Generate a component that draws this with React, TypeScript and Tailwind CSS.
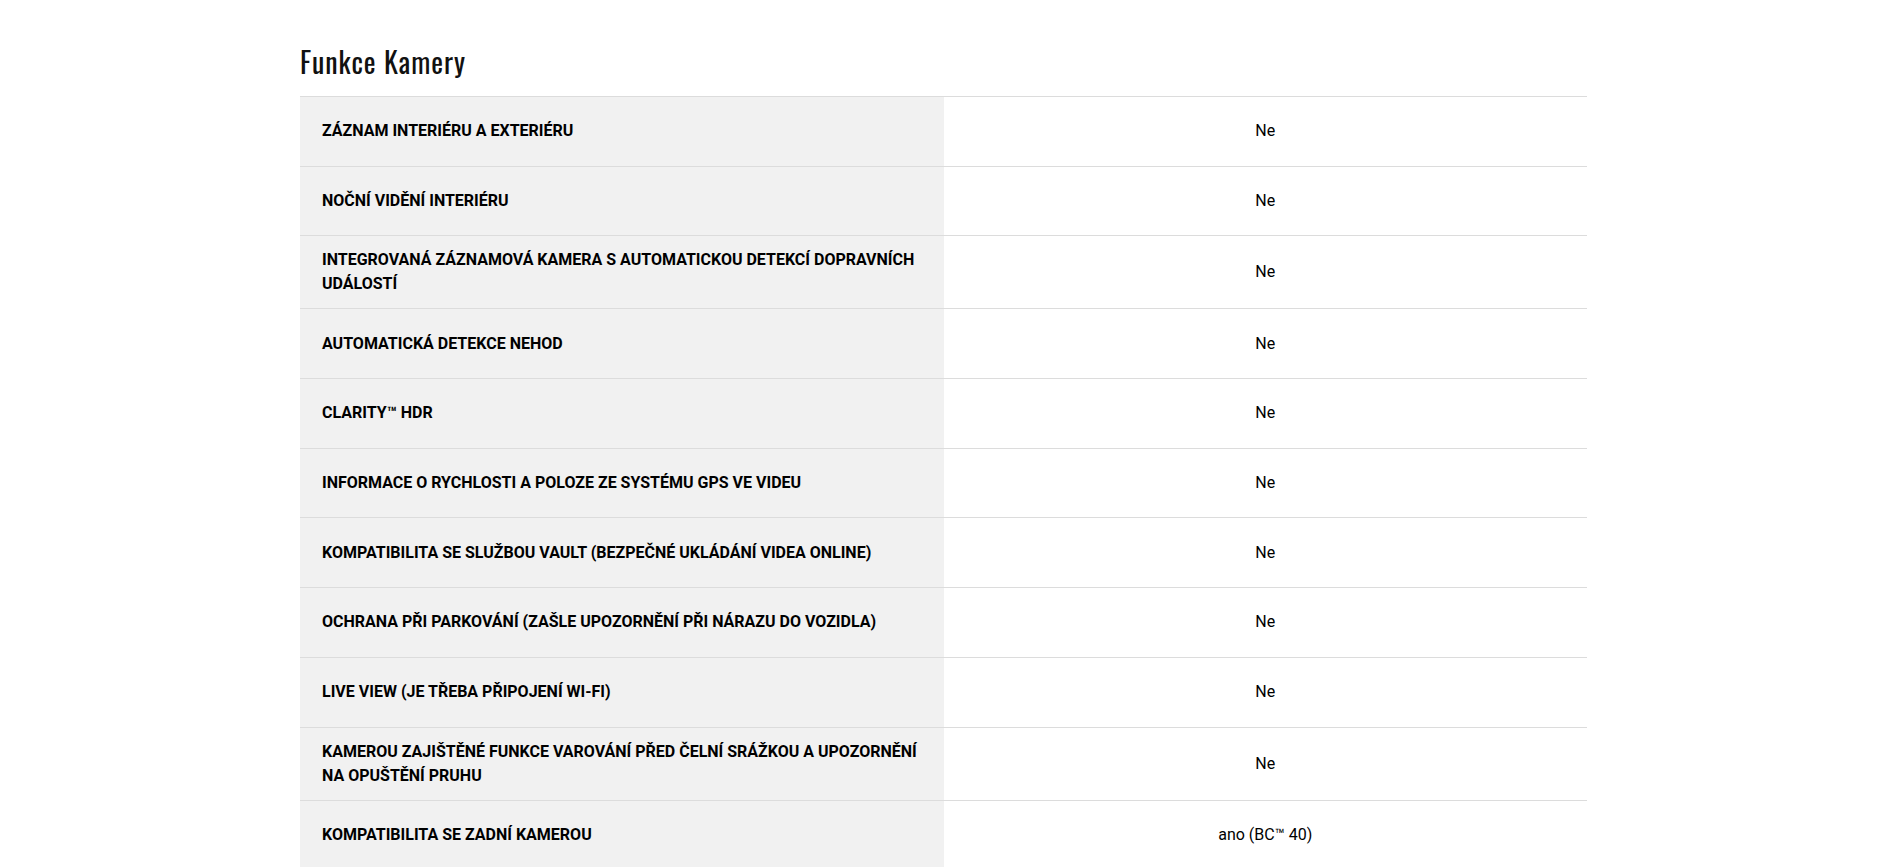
const ROWS: { label: string; value: string }[] = [
  { label: 'Záznam interiéru a exteriéru', value: 'Ne' },
  { label: 'Noční vidění interiéru', value: 'Ne' },
  { label: 'Integrovaná záznamová kamera s automatickou detekcí dopravních událostí', value: 'Ne' },
  { label: 'Automatická detekce nehod', value: 'Ne' },
  { label: 'Clarity™ HDR', value: 'Ne' },
  { label: 'Informace o rychlosti a poloze ze systému GPS ve videu', value: 'Ne' },
  { label: 'Kompatibilita se službou Vault (bezpečné ukládání videa online)', value: 'Ne' },
  { label: 'Ochrana při parkování (zašle upozornění při nárazu do vozidla)', value: 'Ne' },
  { label: 'Live View (je třeba připojení Wi-Fi)', value: 'Ne' },
  { label: 'Kamerou zajištěné funkce varování před čelní srážkou a upozornění na opuštění pruhu', value: 'Ne' },
  { label: 'Kompatibilita se zadní kamerou', value: 'ano (BC™ 40)' },
];

export default function App() {
  return (
    <div className="min-h-screen bg-white font-['Roboto',sans-serif] text-black">
      <div className="w-[1287px] ml-[300px] pt-[44px]">
        <h2 className="font-['Oswald','Liberation_Sans_Narrow','DejaVu_Sans_Condensed',sans-serif] text-[28px] leading-[36px] tracking-[1px] font-normal text-[#111] pb-[16px]">
          Funkce Kamery
        </h2>
        <div className="border-t border-[#dcdcdc]">
          {ROWS.map(r => (
            <div key={r.label} className="grid grid-cols-2 border-b border-[#dcdcdc] min-h-[69.7px]">
              <div className="bg-[#f1f1f1] pl-[22px] pr-[24px] py-[12px] flex items-center">
                <span className="uppercase font-bold text-[16px] leading-[24px]">{r.label}</span>
              </div>
              <div className="flex items-center justify-center text-[16px] leading-[24px]">{r.value}</div>
            </div>
          ))}
        </div>
      </div>
    </div>
  );
}
